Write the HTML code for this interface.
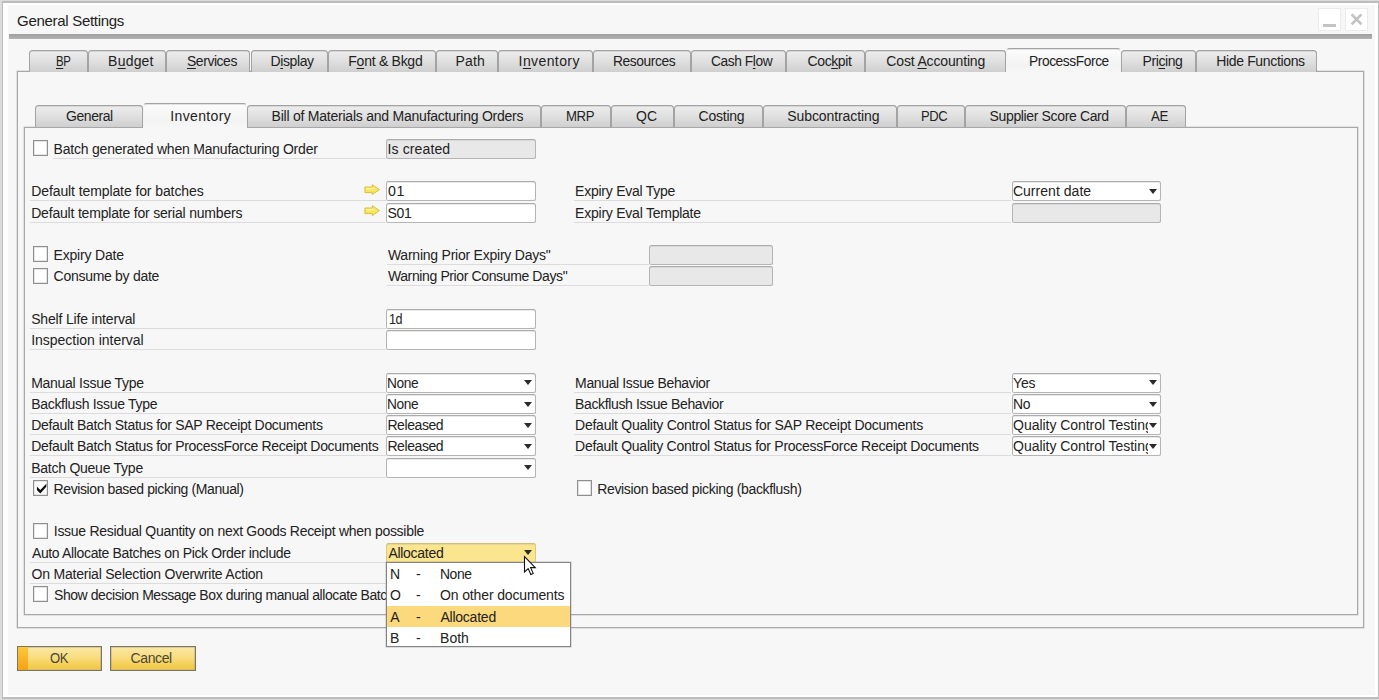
<!DOCTYPE html>
<html lang="en"><head><meta charset="utf-8"><title>General Settings</title>
<style>
*{box-sizing:border-box;margin:0;padding:0}
html,body{width:1379px;height:700px;overflow:hidden;background:#dcdcdc}
body{position:relative;font-family:"Liberation Sans",sans-serif;font-size:14px;color:#222}
.t{position:absolute;white-space:nowrap;line-height:16px;height:16px;display:block;transform-origin:0 0}
.t u{text-decoration:underline;text-underline-offset:1.5px}
.win{position:absolute;left:1.9px;top:1.2px;width:1377.6px;height:697.7px;background:#bcbcbc}
.win2{position:absolute;left:1.4px;top:1.6px;right:1.7px;bottom:1.6px;background:#f7f7f7;border:solid #fff;border-width:2px 3px 2px 5px}
.titleline{position:absolute;left:8.5px;top:34px;width:1363.5px;height:4.6px;background:linear-gradient(#9f9f9f,#b4b4b4)}
.wbtn{position:absolute;width:23px;height:23px;background:#fff;border:1px solid #ebebeb}
.wbtn .min{position:absolute;left:3.8px;top:14.8px;width:13px;height:2.8px;background:#c4c4c4}
.wbtn svg{position:absolute;left:-1px;top:-1px}
.panel{position:absolute;border:1px solid #a8a8a8;box-shadow:0 0 0 0.5px rgba(160,160,160,.5)}
.tab{position:absolute;border:1px solid #a3a3a3;border-bottom:none;border-radius:3.5px 3.5px 0 0;background:linear-gradient(#ededed 0%,#e1e1e1 45%,#cfcfcf 100%);box-shadow:inset 0 0.6px 0 0 rgba(150,150,150,.5)}
.tab.act{background:linear-gradient(#fcfcfc,#f3f3f3 70%,#f7f7f7);border-color:#a4a4a4 #f4f4f4 #f4f4f4 #f4f4f4;box-shadow:inset 0 0.6px 0 0 rgba(150,150,150,.5)}
.f{position:absolute;border:1px solid #b4b4b4;border-top-color:#acacac;border-radius:2.5px;box-shadow:inset 0 0.6px 0 0 rgba(170,170,170,.5)}
.fw{background:#fff}
.fd{background:#e8e8e8}
.fy{background:#fbe58f;border-color:#d9ca80;border-top-color:#cdbf78}
.dd{position:absolute;width:0;height:0;border-left:4.8px solid transparent;border-right:4.8px solid transparent;border-top:5.8px solid #2b2b2b}
.u{position:absolute;height:1px;background:#dcdcdc}
.cb{position:absolute;width:15px;height:16px;border:1px solid #8f8f8f;background:#fff;box-shadow:inset 0 0 0 0.5px rgba(143,143,143,.45)}
.cb svg{position:absolute;left:-1px;top:-1px}
.ai,.cur{position:absolute}
.bt{color:#4a4636}
.list{position:absolute;border:1px solid #848484;background:#fff;box-shadow:0 0 0 0.4px rgba(132,132,132,.6)}
.list .hl{position:absolute;left:0;right:0;height:21px;background:#fbd97c}
.btn{position:absolute;border:1px solid #7b765f;box-shadow:inset 0 0 0 0.5px rgba(123,118,95,.5);background:linear-gradient(#fbe7a8 0%,#f8dc7a 50%,#f2c845 92%,#f6d877 100%)}
.btn .ok{position:absolute;left:0;top:0;bottom:0;width:10px;background:linear-gradient(#fbc93a,#f5a215)}
</style></head>
<body>
<div class="win"><div class="win2"></div></div>
<div class="titleline"></div>
<span id="t1" class="t" style="left:17.10px;top:13.40px;letter-spacing:-0.300px;font-size:15px;">General Settings</span>
<div class="wbtn" style="left:1318px;top:8px"><div class="min"></div></div>
<div class="wbtn" style="left:1345px;top:8px"><svg viewBox="0 0 23 23" width="23" height="23"><path d="M6.6 6.4 L16.4 16.4 M16.4 6.4 L6.6 16.4" stroke="#c2c2c2" stroke-width="2.7" fill="none"/></svg></div>
<div class="panel" style="left:17px;top:71px;width:1347px;height:557px;width:1346.6px"></div>
<div class="tab" style="left:28.7px;top:50.3px;width:59px;height:21.7px"></div>
<span id="t2" class="t" style="left:56.00px;top:53.45px;letter-spacing:-0.420px;transform:scaleX(0.8134);"><u>B</u>P</span>
<div class="tab" style="left:87.7px;top:50.3px;width:78.1px;height:21.7px"></div>
<span id="t3" class="t" style="left:108.10px;top:53.45px;letter-spacing:0.200px;">B<u>u</u>dget</span>
<div class="tab" style="left:165.8px;top:50.3px;width:84.7px;height:21.7px"></div>
<span id="t4" class="t" style="left:187.40px;top:53.45px;letter-spacing:-0.420px;transform:scaleX(0.9928);"><u>S</u>ervices</span>
<div class="tab" style="left:250.5px;top:50.3px;width:77.5px;height:21.7px"></div>
<span id="t5" class="t" style="left:270.60px;top:53.45px;letter-spacing:-0.417px;">D<u>i</u>splay</span>
<div class="tab" style="left:328px;top:50.3px;width:107.6px;height:21.7px"></div>
<span id="t6" class="t" style="left:348.30px;top:53.45px;letter-spacing:-0.270px;">F<u>o</u>nt &amp; Bkgd</span>
<div class="tab" style="left:435.6px;top:50.3px;width:62.2px;height:21.7px"></div>
<span id="t7" class="t" style="left:455.60px;top:53.45px;letter-spacing:0.167px;">Path</span>
<div class="tab" style="left:497.8px;top:50.3px;width:95.2px;height:21.7px"></div>
<span id="t8" class="t" style="left:518.60px;top:53.45px;letter-spacing:0.400px;">I<u>n</u>ventory</span>
<div class="tab" style="left:593px;top:50.3px;width:97.5px;height:21.7px"></div>
<span id="t9" class="t" style="left:613.31px;top:53.45px;letter-spacing:-0.420px;transform:scaleX(0.9866);">Resources</span>
<div class="tab" style="left:690.5px;top:50.3px;width:95.9px;height:21.7px"></div>
<span id="t10" class="t" style="left:711.32px;top:53.45px;letter-spacing:-0.420px;transform:scaleX(0.9815);">Cash F<u>l</u>ow</span>
<div class="tab" style="left:786.4px;top:50.3px;width:79px;height:21.7px"></div>
<span id="t11" class="t" style="left:807.60px;top:53.45px;letter-spacing:-0.417px;">Coc<u>k</u>pit</span>
<div class="tab" style="left:865.4px;top:50.3px;width:140.6px;height:21.7px"></div>
<span id="t12" class="t" style="left:886.30px;top:53.45px;letter-spacing:-0.157px;">Cost <u>A</u>ccounting</span>
<div class="tab act" style="left:1006px;top:48px;width:115px;height:25px"></div>
<span id="t13" class="t" style="left:1028.92px;top:53.45px;letter-spacing:-0.420px;transform:scaleX(0.9816);">ProcessForce</span>
<div class="tab" style="left:1121px;top:50.3px;width:75px;height:21.7px"></div>
<span id="t14" class="t" style="left:1142.60px;top:53.45px;letter-spacing:-0.417px;">Pri<u>c</u>ing</span>
<div class="tab" style="left:1196px;top:50.3px;width:121.3px;height:21.7px"></div>
<span id="t15" class="t" style="left:1216.20px;top:53.45px;letter-spacing:-0.346px;">Hide Functions</span>
<div class="panel" style="left:24px;top:127px;width:1333.6px;height:488px"></div>
<div class="tab" style="left:34.8px;top:105.4px;width:108.4px;height:21.8px"></div>
<span id="t16" class="t" style="left:66.20px;top:108.35px;letter-spacing:-0.420px;transform:scaleX(0.9982);">General</span>
<div class="tab act" style="left:143.2px;top:103.2px;width:104.1px;height:25px"></div>
<span id="t17" class="t" style="left:170.30px;top:108.35px;letter-spacing:0.350px;">Inventory</span>
<div class="tab" style="left:247.3px;top:105.4px;width:293.7px;height:21.8px"></div>
<span id="t18" class="t" style="left:271.60px;top:108.35px;letter-spacing:-0.232px;">Bill of Materials and Manufacturing Orders</span>
<div class="tab" style="left:541px;top:105.4px;width:70px;height:21.8px"></div>
<span id="t19" class="t" style="left:565.66px;top:108.35px;letter-spacing:-0.420px;transform:scaleX(0.9411);">MRP</span>
<div class="tab" style="left:611px;top:105.4px;width:63px;height:21.8px"></div>
<span id="t20" class="t" style="left:636.10px;top:108.35px;letter-spacing:0.000px;">QC</span>
<div class="tab" style="left:674px;top:105.4px;width:88.8px;height:21.8px"></div>
<span id="t21" class="t" style="left:698.60px;top:108.35px;letter-spacing:-0.250px;">Costing</span>
<div class="tab" style="left:762.8px;top:105.4px;width:134px;height:21.8px"></div>
<span id="t22" class="t" style="left:787.30px;top:108.35px;letter-spacing:-0.092px;">Subcontracting</span>
<div class="tab" style="left:896.8px;top:105.4px;width:68.6px;height:21.8px"></div>
<span id="t23" class="t" style="left:920.67px;top:108.35px;letter-spacing:-0.420px;transform:scaleX(0.9278);">PDC</span>
<div class="tab" style="left:965.4px;top:105.4px;width:160.4px;height:21.8px"></div>
<span id="t24" class="t" style="left:989.60px;top:108.35px;letter-spacing:-0.361px;">Supplier Score Card</span>
<div class="tab" style="left:1125.8px;top:105.4px;width:60.6px;height:21.8px"></div>
<span id="t25" class="t" style="left:1151.40px;top:108.35px;letter-spacing:-0.420px;transform:scaleX(0.9479);">AE</span>
<div class="cb" style="left:33.4px;top:140.10px"></div>
<span id="t26" class="t" style="left:53.60px;top:140.75px;letter-spacing:-0.208px;">Batch generated when Manufacturing Order</span>
<div class="u" style="left:53px;top:158px;width:333px"></div>
<div class="f fd " style="left:386.4px;top:139px;width:149.2px;height:20px"></div>
<span id="t27" class="t" style="left:387.60px;top:140.75px;letter-spacing:0.111px;">Is created</span>
<span id="t28" class="t" style="left:31.20px;top:183.25px;letter-spacing:-0.096px;">Default template for batches</span>
<div class="u" style="left:30px;top:200px;width:356px"></div>
<svg class="ai" style="left:364px;top:183.80px" width="16" height="12" viewBox="0 0 16 12"><path d="M0.9 3 H8.3 V0.7 L15.4 5.6 L8.3 10.5 V8.6 H0.9 Z" fill="#f8e663" stroke="#d8bf3c" stroke-width="1" stroke-linejoin="round"/><path d="M1.9 4.6 H10.4" stroke="#fdf3a4" stroke-width="1.3" fill="none"/></svg>
<div class="f fw " style="left:386.4px;top:181px;width:149.2px;height:20px"></div>
<span id="t29" class="t" style="left:387.59px;top:183.25px;letter-spacing:0.600px;transform:scaleX(1.0137);">01</span>
<span id="t30" class="t" style="left:575.10px;top:183.25px;letter-spacing:-0.247px;">Expiry Eval Type</span>
<div class="u" style="left:574px;top:200px;width:437px"></div>
<div class="f fw " style="left:1011.7px;top:181px;width:149.1px;height:20px"></div>
<div class="dd" style="left:1148.90px;top:189.10px"></div>
<span id="t31" class="t" style="left:1012.90px;top:183.25px;letter-spacing:0.036px;">Current date</span>
<span id="t32" class="t" style="left:31.20px;top:204.50px;letter-spacing:-0.194px;">Default template for serial numbers</span>
<div class="u" style="left:30px;top:222px;width:356px"></div>
<svg class="ai" style="left:364px;top:205.05px" width="16" height="12" viewBox="0 0 16 12"><path d="M0.9 3 H8.3 V0.7 L15.4 5.6 L8.3 10.5 V8.6 H0.9 Z" fill="#f8e663" stroke="#d8bf3c" stroke-width="1" stroke-linejoin="round"/><path d="M1.9 4.6 H10.4" stroke="#fdf3a4" stroke-width="1.3" fill="none"/></svg>
<div class="f fw " style="left:386.4px;top:203px;width:149.2px;height:20px"></div>
<span id="t33" class="t" style="left:387.60px;top:204.50px;letter-spacing:-0.400px;">S01</span>
<span id="t34" class="t" style="left:575.10px;top:204.50px;letter-spacing:-0.237px;">Expiry Eval Template</span>
<div class="u" style="left:574px;top:222px;width:437px"></div>
<div class="f fd " style="left:1011.7px;top:203px;width:149.1px;height:20px"></div>
<div class="cb" style="left:33.4px;top:246.35px"></div>
<span id="t35" class="t" style="left:53.60px;top:247.00px;letter-spacing:-0.200px;">Expiry Date</span>
<span id="t36" class="t" style="left:387.90px;top:247.00px;letter-spacing:-0.232px;">Warning Prior Expiry Days"</span>
<div class="u" style="left:387px;top:264px;width:262px"></div>
<div class="f fd " style="left:649.0px;top:245px;width:124.2px;height:20px"></div>
<div class="cb" style="left:33.4px;top:267.60px"></div>
<span id="t37" class="t" style="left:53.60px;top:268.25px;letter-spacing:-0.286px;">Consume by date</span>
<span id="t38" class="t" style="left:387.90px;top:268.25px;letter-spacing:-0.377px;">Warning Prior Consume Days"</span>
<div class="u" style="left:387px;top:285px;width:262px"></div>
<div class="f fd " style="left:649.0px;top:266px;width:124.2px;height:20px"></div>
<span id="t39" class="t" style="left:31.20px;top:310.75px;letter-spacing:-0.172px;">Shelf Life interval</span>
<div class="u" style="left:30px;top:328px;width:356px"></div>
<div class="f fw " style="left:386.4px;top:309px;width:149.2px;height:20px"></div>
<span id="t40" class="t" style="left:389.00px;top:310.75px;letter-spacing:-0.420px;transform:scaleX(0.8984);">1d</span>
<span id="t41" class="t" style="left:31.20px;top:332.00px;letter-spacing:-0.022px;">Inspection interval</span>
<div class="u" style="left:30px;top:349px;width:356px"></div>
<div class="f fw " style="left:386.4px;top:330px;width:149.2px;height:20px"></div>
<span id="t42" class="t" style="left:31.20px;top:374.50px;letter-spacing:-0.275px;">Manual Issue Type</span>
<div class="u" style="left:30px;top:392px;width:356px"></div>
<div class="f fw " style="left:386.4px;top:373px;width:149.2px;height:20px"></div>
<div class="dd" style="left:523.70px;top:380.35px"></div>
<span id="t43" class="t" style="left:387.42px;top:374.50px;letter-spacing:-0.420px;transform:scaleX(0.9792);">None</span>
<span id="t44" class="t" style="left:575.10px;top:374.50px;letter-spacing:-0.365px;">Manual Issue Behavior</span>
<div class="u" style="left:574px;top:392px;width:437px"></div>
<div class="f fw " style="left:1011.7px;top:373px;width:149.1px;height:20px"></div>
<div class="dd" style="left:1148.90px;top:380.35px"></div>
<span id="t45" class="t" style="left:1013.10px;top:374.50px;letter-spacing:-0.250px;">Yes</span>
<span id="t46" class="t" style="left:31.20px;top:395.75px;letter-spacing:-0.305px;">Backflush Issue Type</span>
<div class="u" style="left:30px;top:413px;width:356px"></div>
<div class="f fw " style="left:386.4px;top:394px;width:149.2px;height:20px"></div>
<div class="dd" style="left:523.70px;top:401.60px"></div>
<span id="t47" class="t" style="left:387.42px;top:395.75px;letter-spacing:-0.420px;transform:scaleX(0.9792);">None</span>
<span id="t48" class="t" style="left:575.10px;top:395.75px;letter-spacing:-0.374px;">Backflush Issue Behavior</span>
<div class="u" style="left:574px;top:413px;width:437px"></div>
<div class="f fw " style="left:1011.7px;top:394px;width:149.1px;height:20px"></div>
<div class="dd" style="left:1148.90px;top:401.60px"></div>
<span id="t49" class="t" style="left:1013.11px;top:395.75px;letter-spacing:-0.420px;transform:scaleX(0.9949);">No</span>
<span id="t50" class="t" style="left:31.20px;top:417.00px;letter-spacing:-0.307px;">Default Batch Status for SAP Receipt Documents</span>
<div class="u" style="left:30px;top:434px;width:356px"></div>
<div class="f fw " style="left:386.4px;top:415px;width:149.2px;height:20px"></div>
<div class="dd" style="left:523.70px;top:422.85px"></div>
<span id="t51" class="t" style="left:387.40px;top:417.00px;letter-spacing:-0.414px;">Released</span>
<span id="t52" class="t" style="left:575.10px;top:417.00px;letter-spacing:-0.260px;">Default Quality Control Status for SAP Receipt Documents</span>
<div class="u" style="left:574px;top:434px;width:437px"></div>
<div class="f fw " style="left:1011.7px;top:415px;width:149.1px;height:20px"></div>
<div class="dd" style="left:1148.90px;top:422.85px"></div>
<span id="t53" class="t" style="left:1013.10px;top:417.00px;letter-spacing:-0.045px;width:134.50px;overflow:hidden;">Quality Control Testing</span>
<span id="t54" class="t" style="left:31.20px;top:438.25px;letter-spacing:-0.309px;">Default Batch Status for ProcessForce Receipt Documents</span>
<div class="u" style="left:30px;top:455px;width:356px"></div>
<div class="f fw " style="left:386.4px;top:436px;width:149.2px;height:20px"></div>
<div class="dd" style="left:523.70px;top:444.10px"></div>
<span id="t55" class="t" style="left:387.40px;top:438.25px;letter-spacing:-0.414px;">Released</span>
<span id="t56" class="t" style="left:575.10px;top:438.25px;letter-spacing:-0.266px;">Default Quality Control Status for ProcessForce Receipt Documents</span>
<div class="u" style="left:574px;top:455px;width:437px"></div>
<div class="f fw " style="left:1011.7px;top:436px;width:149.1px;height:20px"></div>
<div class="dd" style="left:1148.90px;top:444.10px"></div>
<span id="t57" class="t" style="left:1013.10px;top:438.25px;letter-spacing:-0.045px;width:134.50px;overflow:hidden;">Quality Control Testing</span>
<span id="t58" class="t" style="left:31.20px;top:459.50px;letter-spacing:-0.247px;">Batch Queue Type</span>
<div class="u" style="left:30px;top:477px;width:356px"></div>
<div class="f fw " style="left:386.4px;top:458px;width:149.2px;height:20px"></div>
<div class="dd" style="left:523.70px;top:465.35px"></div>
<div class="cb" style="left:33.4px;top:480.10px"><svg viewBox="0 0 15 16" width="15" height="16"><path d="M3.9 6.4 L7.3 9.9 L13.3 3.7 L13.3 6.7 L7.3 13.4 L3.9 10.1 Z" fill="#0c0c0c"/></svg></div>
<span id="t59" class="t" style="left:53.60px;top:480.75px;letter-spacing:-0.400px;">Revision based picking (Manual)</span>
<div class="cb" style="left:577.2px;top:480.10px"></div>
<span id="t60" class="t" style="left:597.20px;top:480.75px;letter-spacing:-0.330px;">Revision based picking (backflush)</span>
<div class="cb" style="left:33.4px;top:522.60px"></div>
<span id="t61" class="t" style="left:53.80px;top:523.25px;letter-spacing:-0.281px;">Issue Residual Quantity on next Goods Receipt when possible</span>
<span id="t62" class="t" style="left:31.90px;top:544.50px;letter-spacing:-0.352px;">Auto Allocate Batches on Pick Order include</span>
<div class="u" style="left:30px;top:562px;width:356px"></div>
<div class="f fy " style="left:386.4px;top:543px;width:149.2px;height:20px"></div>
<div class="dd" style="left:523.70px;top:550.35px"></div>
<span id="t63" class="t" style="left:388.40px;top:544.50px;letter-spacing:-0.287px;">Allocated</span>
<span id="t64" class="t" style="left:31.60px;top:565.75px;letter-spacing:-0.219px;">On Material Selection Overwrite Action</span>
<div class="u" style="left:30px;top:583px;width:356px"></div>
<div class="cb" style="left:33.4px;top:586.35px"></div>
<span id="t65" class="t" style="left:53.80px;top:587.00px;letter-spacing:-0.420px;transform:scaleX(0.9983);">Show decision Message Box during manual allocate Batc</span>
<div class="list" style="left:386.2px;top:562.4px;width:184.6px;height:85px"><div class="hl" style="top:43px"></div></div>
<span id="t66" class="t" style="left:389.90px;top:566.15px;letter-spacing:0.000px;">N</span>
<span id="t67" class="t" style="left:416.10px;top:566.15px;letter-spacing:0.000px;">-</span>
<span id="t68" class="t" style="left:440.11px;top:566.15px;letter-spacing:-0.420px;transform:scaleX(0.9922);">None</span>
<span id="t69" class="t" style="left:389.90px;top:587.40px;letter-spacing:0.000px;">O</span>
<span id="t70" class="t" style="left:416.10px;top:587.40px;letter-spacing:0.000px;">-</span>
<span id="t71" class="t" style="left:440.10px;top:587.40px;letter-spacing:-0.147px;">On other documents</span>
<span id="t72" class="t" style="left:390.20px;top:608.65px;letter-spacing:0.000px;">A</span>
<span id="t73" class="t" style="left:416.10px;top:608.65px;letter-spacing:0.000px;">-</span>
<span id="t74" class="t" style="left:440.40px;top:608.65px;letter-spacing:-0.225px;">Allocated</span>
<span id="t75" class="t" style="left:389.90px;top:629.90px;letter-spacing:0.000px;">B</span>
<span id="t76" class="t" style="left:416.10px;top:629.90px;letter-spacing:0.000px;">-</span>
<span id="t77" class="t" style="left:440.10px;top:629.90px;letter-spacing:0.000px;">Both</span>
<svg class="cur" style="left:523px;top:555px" width="16" height="23" viewBox="0 0 16 23"><path d="M1.5 1.6 V17 L5.2 13.6 L7.8 19.5 L10.2 18.4 L7.6 12.6 H12.3 Z" fill="#fff" stroke="#111" stroke-width="1.1" stroke-linejoin="miter"/></svg>
<div class="btn" style="left:17px;top:646px;width:85px;height:25px"><div class="ok"></div></div>
<span id="t78" class="t bt" style="left:50.17px;top:650.45px;letter-spacing:-0.420px;transform:scaleX(0.9311);">OK</span>
<div class="btn" style="left:110px;top:646px;width:85.5px;height:25px"></div>
<span id="t79" class="t bt" style="left:130.60px;top:650.45px;letter-spacing:-0.400px;">Cancel</span>
</body></html>
